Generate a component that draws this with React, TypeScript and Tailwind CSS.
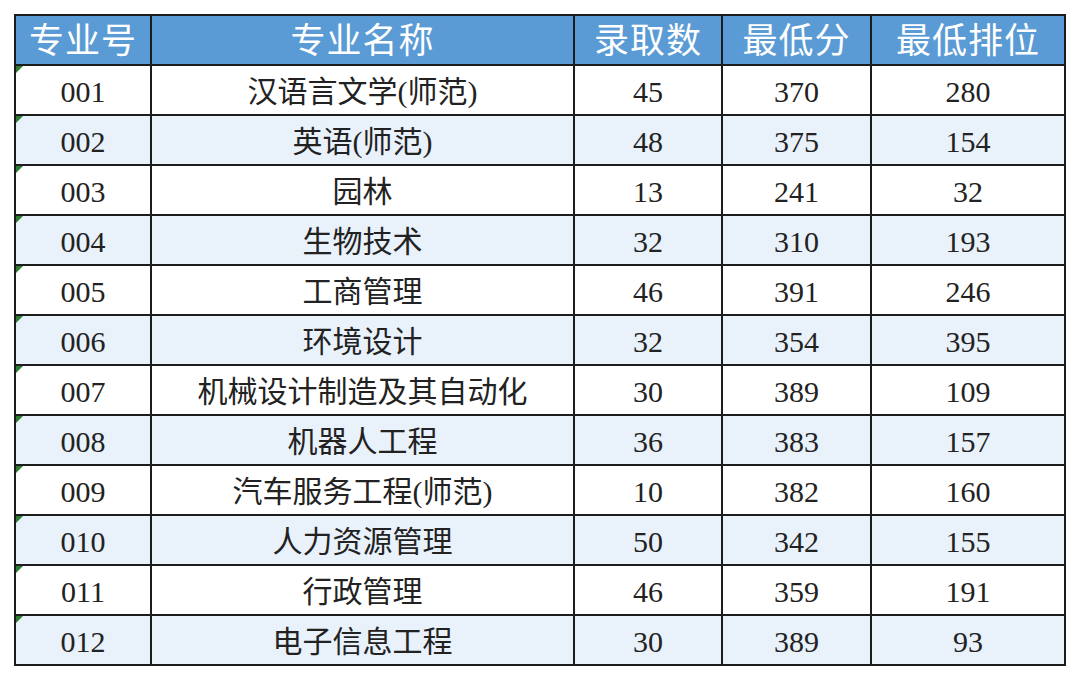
import React from "react";

const rows: [string, string, number, number, number][] = [
  ["001", "汉语言文学(师范)", 45, 370, 280],
  ["002", "英语(师范)", 48, 375, 154],
  ["003", "园林", 13, 241, 32],
  ["004", "生物技术", 32, 310, 193],
  ["005", "工商管理", 46, 391, 246],
  ["006", "环境设计", 32, 354, 395],
  ["007", "机械设计制造及其自动化", 30, 389, 109],
  ["008", "机器人工程", 36, 383, 157],
  ["009", "汽车服务工程(师范)", 10, 382, 160],
  ["010", "人力资源管理", 50, 342, 155],
  ["011", "行政管理", 46, 359, 191],
  ["012", "电子信息工程", 30, 389, 93],
];

const headers = ["专业号", "专业名称", "录取数", "最低分", "最低排位"];

export default function App() {
  return (
    <div className="w-[1080px] h-[681px] bg-white pt-[14px] pl-[14px]">
      <table
        className="table-fixed border-collapse w-[1050px] text-[#222] font-['Liberation_Serif','Noto_Sans_CJK_SC',serif]"
      >
        <colgroup>
          <col className="w-[136px]" />
          <col className="w-[423px]" />
          <col className="w-[148px]" />
          <col className="w-[149px]" />
          <col className="w-[194px]" />
        </colgroup>
        <thead>
          <tr className="h-[50px] bg-[#5b9bd5]">
            {headers.map((h) => (
              <th
                key={h}
                className="border-2 border-[#1c1c1c] text-white font-normal text-[35px] leading-none tracking-[1px] text-center p-0 pt-[3px]"
              >
                {h}
              </th>
            ))}
          </tr>
        </thead>
        <tbody>
          {rows.map((r, i) => (
            <tr key={r[0]} className={`h-[50px] ${i % 2 === 1 ? "bg-[#e9f1fb]" : "bg-white"}`}>
              <td className="relative border-2 border-[#1c1c1c] text-center text-[30px] leading-none p-0 pt-[3px]">
                <span className="absolute left-0 top-0 w-0 h-0 border-t-[7px] border-r-[7px] border-t-[#2f7d32] border-r-transparent" />
                {r[0]}
              </td>
              <td className="border-2 border-[#1c1c1c] text-center text-[30px] leading-none p-0 pt-[3px]">{r[1]}</td>
              <td className="border-2 border-[#1c1c1c] text-center text-[30px] leading-none p-0 pt-[3px]">{r[2]}</td>
              <td className="border-2 border-[#1c1c1c] text-center text-[30px] leading-none p-0 pt-[3px]">{r[3]}</td>
              <td className="border-2 border-[#1c1c1c] text-center text-[30px] leading-none p-0 pt-[3px]">{r[4]}</td>
            </tr>
          ))}
        </tbody>
      </table>
    </div>
  );
}
